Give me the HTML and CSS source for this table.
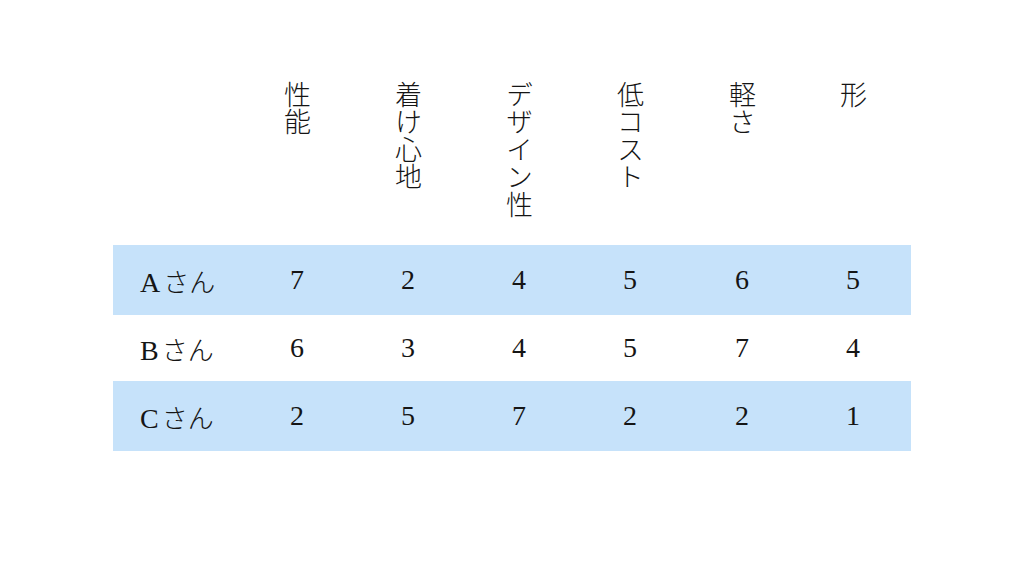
FILE: index.html
```html
<!DOCTYPE html>
<html lang="ja">
<head>
<meta charset="utf-8">
<title>評価表</title>
<link rel="stylesheet" href="styles.css">
</head>
<body>
<div class="page">
  <div class="table">
    <div class="row head">
      <div class="cell label"></div>
      <div class="cell"><span class="vt">性能</span></div>
      <div class="cell"><span class="vt">着け心地</span></div>
      <div class="cell"><span class="vt">デザイン性</span></div>
      <div class="cell"><span class="vt">低コスト</span></div>
      <div class="cell"><span class="vt">軽さ</span></div>
      <div class="cell last"><span class="vt">形</span></div>
    </div>
    <div class="row data tall shaded">
      <div class="cell label">A<span class="jp">さん</span></div>
      <div class="cell">7</div><div class="cell">2</div><div class="cell">4</div>
      <div class="cell">5</div><div class="cell">6</div><div class="cell last">5</div>
    </div>
    <div class="row data">
      <div class="cell label">B<span class="jp">さん</span></div>
      <div class="cell">6</div><div class="cell">3</div><div class="cell">4</div>
      <div class="cell">5</div><div class="cell">7</div><div class="cell last">4</div>
    </div>
    <div class="row data tall shaded">
      <div class="cell label">C<span class="jp">さん</span></div>
      <div class="cell">2</div><div class="cell">5</div><div class="cell">7</div>
      <div class="cell">2</div><div class="cell">2</div><div class="cell last">1</div>
    </div>
  </div>
</div>
</body>
</html>
```
FILE: styles.css
```css
html, body {
  margin: 0;
  padding: 0;
  background: #ffffff;
}
.page {
  width: 1025px;
  height: 577px;
  padding: 80px 0 0 113px;
  box-sizing: border-box;
  color: #151515;
}
.table {
  width: 798px;
  display: flex;
  flex-direction: column;
}
.row {
  display: grid;
  grid-template-columns: 150px 111px 111px 111px 112px 111px 92px;
  align-items: center;
}
.head {
  height: 165px;
  align-items: start;
}
.head .cell {
  padding-left: 20px;
}
.vt {
  writing-mode: vertical-rl;
  font-family: "Noto Sans CJK JP", sans-serif;
  font-size: 27px;
  font-weight: 300;
  letter-spacing: 0.5px;
  line-height: 28px;
  display: inline-block;
  margin-top: 1px;
}
.data {
  height: 66px;
  font-family: "Liberation Serif", "Noto Sans CJK JP", serif;
  font-size: 28px;
}
.data.tall {
  height: 70px;
}
.shaded {
  background: #c6e2fa;
}
.cell {
  padding-left: 27px;
}
.label {
  padding-left: 27px;
}
.jp {
  font-family: "Noto Sans CJK JP", sans-serif;
  font-size: 26px;
  font-weight: 300;
  margin-left: 3px;
}
```
